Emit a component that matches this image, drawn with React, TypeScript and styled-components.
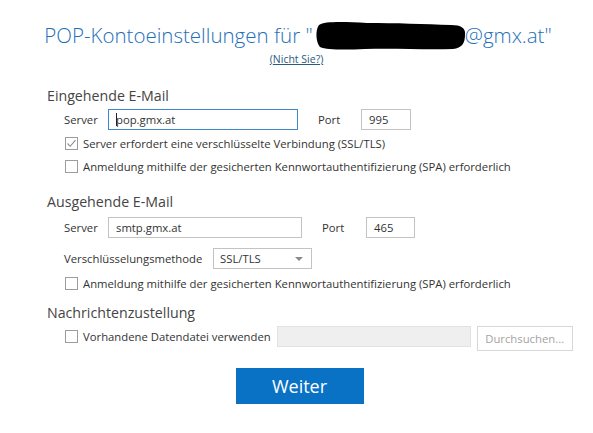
import styled, { createGlobalStyle } from 'styled-components';

const GlobalStyle = createGlobalStyle`
  html, body {
    margin: 0;
    padding: 0;
    background: #ffffff;
  }
  body {
    font-family: 'Open Sans', 'Noto Sans', 'Liberation Sans', sans-serif;
    color: #444444;
  }
`;

const Page = styled.div`
  width: 593px;
  height: 433px;
  box-sizing: border-box;
  padding-top: 21px;
  overflow: hidden;
`;

const Header = styled.header`
  display: flex;
  flex-direction: column;
  align-items: center;
`;

const Title = styled.h1`
  margin: 0;
  height: 28px;
  display: flex;
  align-items: center;
  font-size: 20.5px;
  font-weight: 300;
  color: #1e6fb8;
  white-space: nowrap;
  padding-left: 3px;
`;

const Redacted = styled.svg`
  display: block;
  width: 152px;
  height: 32px;
  margin: 0 -2px 0 2px;
`;

const NotYou = styled.a`
  margin-top: 2px;
  line-height: 16px;
  font-size: 10.5px;
  color: #2a5a85;
  text-decoration: underline;
  cursor: pointer;
`;

const Form = styled.form`
  padding-left: 47px;
  margin: 0;
`;

const Section = styled.section<{ $gap: number }>`
  margin-top: ${(p) => p.$gap}px;
`;

const Heading = styled.h2`
  margin: 0;
  height: 20px;
  line-height: 20px;
  font-size: 14.2px;
  font-weight: 400;
  color: #444444;
`;

const SectionBody = styled.div`
  padding-left: 17px;
`;

const FieldRow = styled.div<{ $gap?: number; $align?: string }>`
  display: flex;
  align-items: ${(p) => p.$align || 'center'};
  margin-top: ${(p) => p.$gap ?? 0}px;
`;

const Label = styled.span<{ $width: number }>`
  width: ${(p) => p.$width}px;
  flex: none;
  font-size: 11.3px;
  line-height: 20px;
  color: #333333;
`;

const TextBox = styled.div<{ $width: number; $focused?: boolean; $disabled?: boolean }>`
  width: ${(p) => p.$width}px;
  height: 21px;
  box-sizing: border-box;
  flex: none;
  display: flex;
  align-items: center;
  padding-left: 7px;
  border: 1px solid
    ${(p) => (p.$focused ? '#3c88c8' : p.$disabled ? '#e2e2e2' : '#c3c3c3')};
  background: ${(p) => (p.$disabled ? '#efefef' : '#ffffff')};
  font-size: 11.3px;
  color: #333333;
`;

const Caret = styled.span`
  display: inline-block;
  width: 1px;
  height: 13px;
  background: #222222;
  margin-right: -1px;
`;

const Gap = styled.span<{ $w: number }>`
  display: inline-block;
  flex: none;
  width: ${(p) => p.$w}px;
`;

const Select = styled.div`
  width: 99px;
  height: 21px;
  box-sizing: border-box;
  flex: none;
  display: flex;
  align-items: center;
  justify-content: space-between;
  padding: 0 8px 0 6px;
  border: 1px solid #c3c3c3;
  font-size: 11.3px;
  color: #333333;
`;

const Arrow = styled.span`
  width: 0;
  height: 0;
  border-left: 4px solid transparent;
  border-right: 4px solid transparent;
  border-top: 4px solid #8a8a8a;
`;

const CheckRow = styled.label<{ $gap?: number }>`
  display: flex;
  align-items: center;
  height: 20px;
  margin-top: ${(p) => p.$gap ?? 0}px;
  font-size: 11.3px;
  color: #333333;
  white-space: nowrap;
`;

const Box = styled.span`
  width: 13px;
  height: 13px;
  box-sizing: border-box;
  flex: none;
  border: 1px solid #9c9c9c;
  margin: 0 5px 0 1px;
  display: flex;
  align-items: center;
  justify-content: center;
  background: #ffffff;
`;

const BrowseButton = styled.button`
  width: 96px;
  height: 25px;
  box-sizing: border-box;
  flex: none;
  margin-left: 6px;
  border: 1px solid #d8d8d8;
  background: #ffffff;
  color: #a3a3a3;
  font-family: inherit;
  font-size: 11.3px;
  padding: 0;
`;

const Footer = styled.div`
  display: flex;
  justify-content: center;
  margin-top: 17px;
  padding-left: 6px;
`;

const NextButton = styled.button`
  width: 128px;
  height: 36px;
  border: none;
  background: #0a72c4;
  color: #ffffff;
  font-family: inherit;
  font-size: 18px;
  font-weight: 400;
  padding: 0;
  cursor: pointer;
`;

const Check = ({ checked }: { checked?: boolean }) => (
  <Box>
    {checked && (
      <svg width="11" height="11" viewBox="0 0 11 11">
        <polyline points="1.5,5.5 4.2,8.3 9.5,2.2" fill="none" stroke="#8d8d8d" strokeWidth="1.1" />
      </svg>
    )}
  </Box>
);

export default function App() {
  return (
    <>
      <GlobalStyle />
      <Page>
        <Header>
          <Title>
            POP-Kontoeinstellungen für "
            <Redacted viewBox="0 0 152 32">
              <path
                d="M4 6 C10 2 30 3 52 4 C80 4 110 5 136 6 C146 6 151 9 150 16 C150 24 147 29 138 30 C110 31 80 29 50 30 C30 31 12 31 5 28 C1 24 0 11 4 6 Z"
                fill="#000000"
              />
            </Redacted>
            @gmx.at"
          </Title>
          <NotYou>(Nicht Sie?)</NotYou>
        </Header>

        <Form>
          <Section $gap={19}>
            <Heading>Eingehende E-Mail</Heading>
            <SectionBody>
              <FieldRow $gap={3}>
                <Label $width={44}>Server</Label>
                <TextBox $width={190} $focused>
                  <Caret />
                  pop.gmx.at
                </TextBox>
                <Gap $w={20} />
                <Label $width={43}>Port</Label>
                <TextBox $width={50}>995</TextBox>
              </FieldRow>
              <CheckRow $gap={3}>
                <Check checked />
                Server erfordert eine verschlüsselte Verbindung (SSL/TLS)
              </CheckRow>
              <CheckRow $gap={3}>
                <Check />
                Anmeldung mithilfe der gesicherten Kennwortauthentifizierung (SPA) erforderlich
              </CheckRow>
            </SectionBody>
          </Section>

          <Section $gap={16}>
            <Heading>Ausgehende E-Mail</Heading>
            <SectionBody>
              <FieldRow $gap={5}>
                <Label $width={44}>Server</Label>
                <TextBox $width={194}>smtp.gmx.at</TextBox>
                <Gap $w={20} />
                <Label $width={44}>Port</Label>
                <TextBox $width={49}>465</TextBox>
              </FieldRow>
              <FieldRow $gap={10}>
                <Label $width={149}>Verschlüsselungsmethode</Label>
                <Select>
                  SSL/TLS
                  <Arrow />
                </Select>
              </FieldRow>
              <CheckRow $gap={4}>
                <Check />
                Anmeldung mithilfe der gesicherten Kennwortauthentifizierung (SPA) erforderlich
              </CheckRow>
            </SectionBody>
          </Section>

          <Section $gap={10}>
            <Heading>Nachrichtenzustellung</Heading>
            <SectionBody>
              <FieldRow $gap={3} $align="flex-start">
                <CheckRow>
                  <Check />
                  Vorhandene Datendatei verwenden
                </CheckRow>
                <Gap $w={6} />
                <TextBox $width={194} $disabled />
                <BrowseButton type="button">Durchsuchen...</BrowseButton>
              </FieldRow>
            </SectionBody>
          </Section>
        </Form>

        <Footer>
          <NextButton type="button">Weiter</NextButton>
        </Footer>
      </Page>
    </>
  );
}
